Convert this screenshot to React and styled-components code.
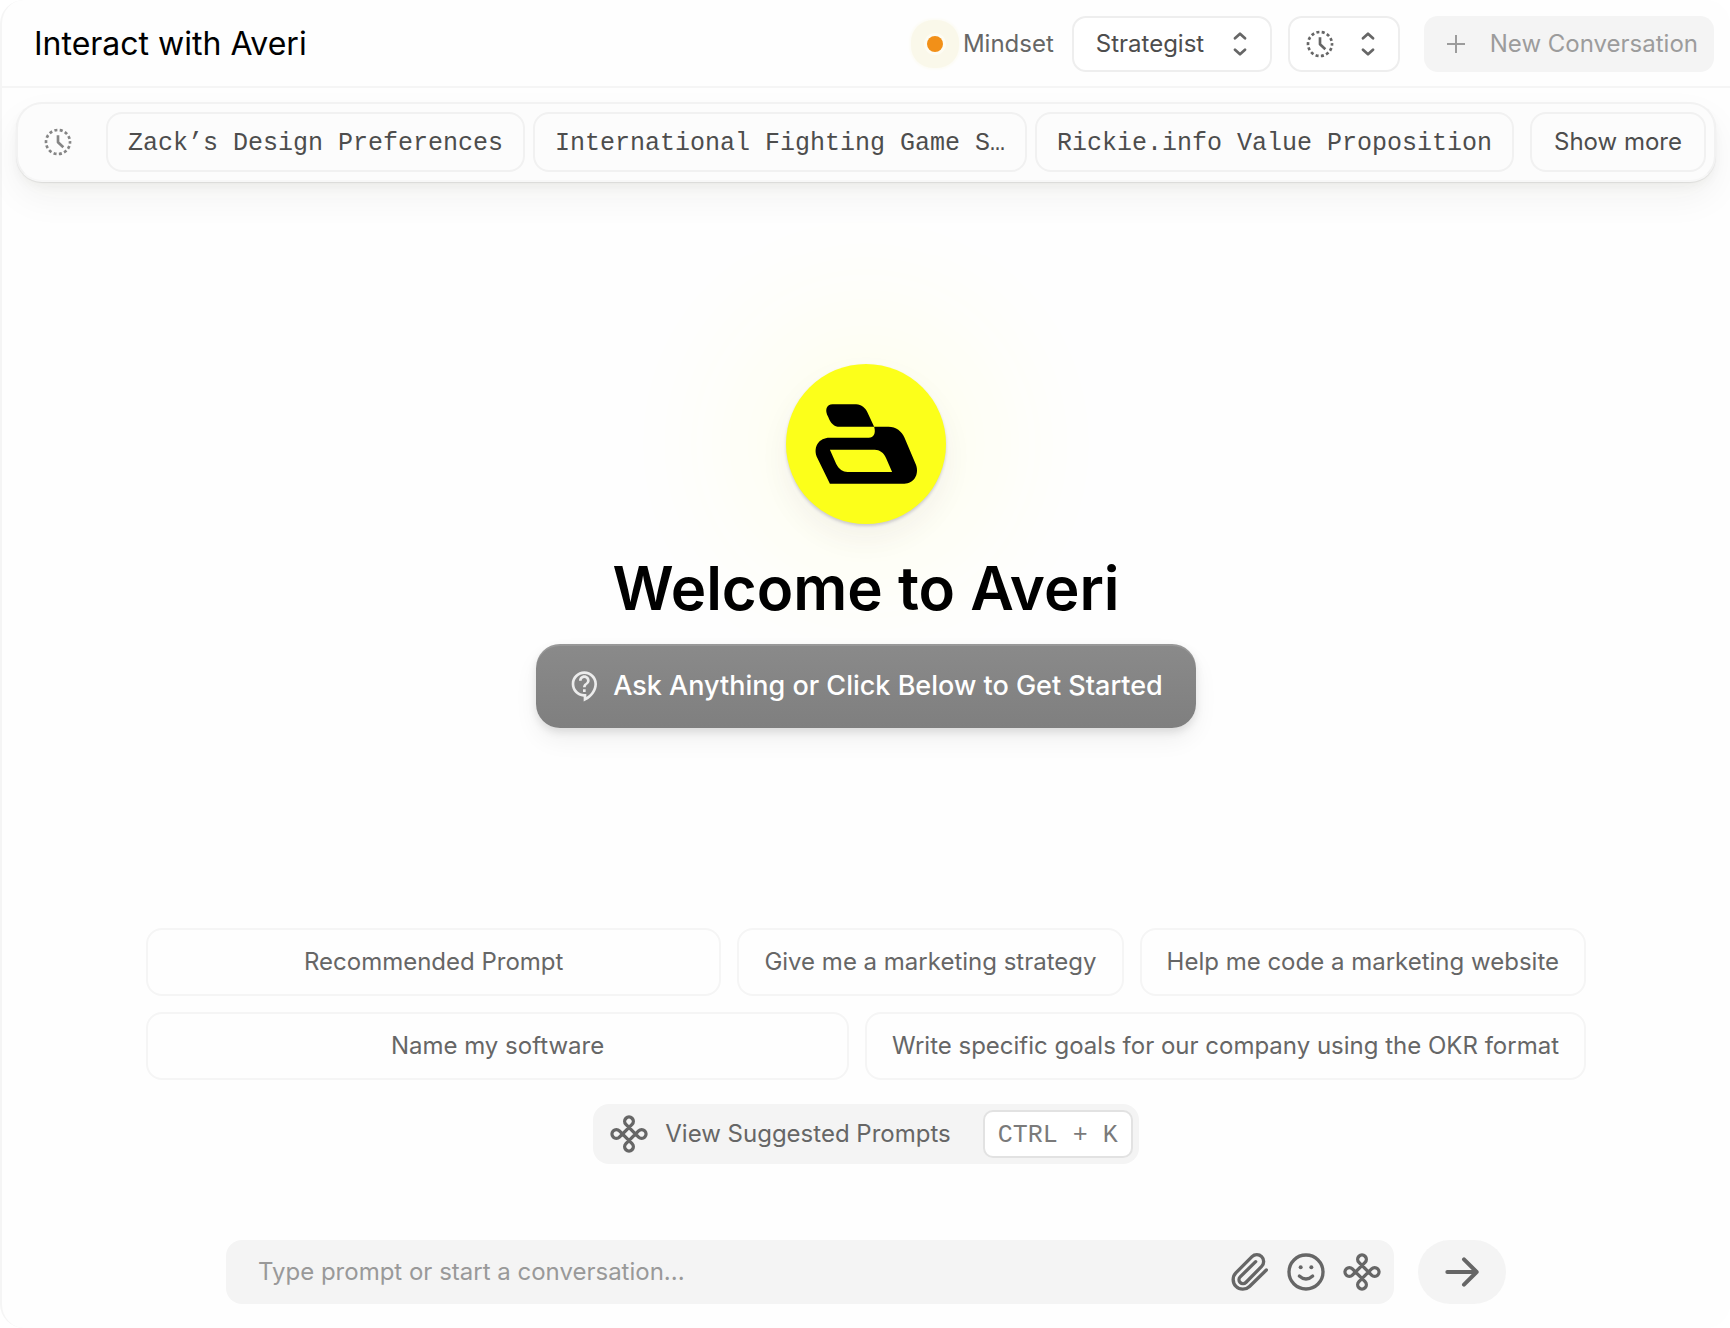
import React, { useState } from 'react'
import styled, { createGlobalStyle } from 'styled-components'
import { MdOutlineContactSupport } from 'react-icons/md'

const chats = [
  'Zack’s Design Preferences',
  'International Fighting Game S…',
  'Rickie.info Value Proposition',
]

const promptRows = [
  ['Recommended Prompt', 'Give me a marketing strategy', 'Help me code a marketing website'],
  ['Name my software', 'Write specific goals for our company using the OKR format'],
]

const modes = ['Strategist', 'Copywriter', 'Designer']

const ClockIcon = () => (
  <Icon $size={28} viewBox="-42 -42 84 84" $stroke={8} aria-hidden="true">
    <circle r="36" strokeDasharray="9 7.16" strokeDashoffset="4" strokeLinecap="butt" />
    <path d="M0 -20V1L16 16" strokeLinecap="butt" />
  </Icon>
)

const ChevronsIcon = () => (
  <Icon $size={24} viewBox="-36 -36 72 72" $stroke={8} aria-hidden="true">
    <path d="M-15 -17L0 -31L15 -17M-15 17L0 31L15 17" />
  </Icon>
)

const PlusIcon = () => (
  <Icon $size={24} viewBox="-12 -12 24 24" $stroke={2} aria-hidden="true">
    <path d="M-9 0H9M0 -9V9" strokeLinecap="butt" />
  </Icon>
)

const LoopIcon = () => (
  <Icon $size={40} viewBox="-60 -60 120 120" $stroke={10} aria-hidden="true">
    <path d="M-9.2 -28.8L28.8 9.2A13 13 0 1 0 28.8 -9.2L-9.2 28.8A13 13 0 1 0 9.2 28.8L-28.8 -9.2A13 13 0 1 0 -28.8 9.2L9.2 -28.8A13 13 0 1 0 -9.2 -28.8Z" />
  </Icon>
)

const ClipIcon = () => (
  <Icon $size={40} viewBox="90 95 120 120" $stroke={10} aria-hidden="true">
    <path d="M199 149L148.5 198.5A29 29 0 0 1 107.5 157.5L156 109A20.5 20.5 0 0 1 185 138L137.5 186.5A12 12 0 0 1 120.5 169.5L167 124" />
  </Icon>
)

const SmileIcon = () => (
  <Icon $size={40} viewBox="258 95 120 120" $stroke={10} aria-hidden="true">
    <circle cx="318" cy="155" r="51" />
    <path d="M298 167Q318 185 338 167" />
    <circle cx="302" cy="141" r="6" fill="currentColor" stroke="none" />
    <circle cx="334" cy="141" r="6" fill="currentColor" stroke="none" />
  </Icon>
)

const ArrowIcon = () => (
  <Icon $size={40} viewBox="726 96 120 120" $stroke={12} aria-hidden="true">
    <path d="M742 156H830M792 118L830 156L792 194" />
  </Icon>
)

const App = () => {
  const [mode, setMode] = useState('Strategist')
  const [text, setText] = useState('')

  return (
    <>
      <GlobalStyle />
      <Page>
        <Header>
          <h1>Interact with Averi</h1>
          <Controls>
            <MindsetLabel htmlFor="mindset">
              <Dot />
              Mindset
            </MindsetLabel>
            <SelectBox>
              <select id="mindset" value={mode} onChange={(e) => setMode(e.target.value)}>
                {modes.map((m) => (
                  <option key={m}>{m}</option>
                ))}
              </select>
              <ChevronsIcon />
            </SelectBox>
            <HistoryButton type="button" aria-label="History" aria-haspopup="menu">
              <ClockIcon />
              <ChevronsIcon />
            </HistoryButton>
            <NewButton type="button">
              <PlusIcon />
              New Conversation
            </NewButton>
          </Controls>
        </Header>

        <RecentBar aria-label="Recent conversations">
          <RecentIcon>
            <ClockIcon />
          </RecentIcon>
          <Chats>
            {chats.map((chat) => (
              <ChatChip key={chat} type="button">
                {chat}
              </ChatChip>
            ))}
          </Chats>
          <Chip type="button">Show more</Chip>
        </RecentBar>

        <Hero>
          <Logo>
            <svg viewBox="137 101 481 481" role="img" aria-label="Averi">
              <path d="M277 222H348C364 222 376 233 382 247L402 290H298C282 290 271 279 264 260C252 240 259 222 277 222Z" />
              <path
                fillRule="evenodd"
                d="M402 290H445C468 290 485 304 493 322L528 405C538 434 521 461 493 461H269L229 379C219 350 236 323 268 323H386C400 323 408 310 402 290ZM269 359L288 402C296 418 308 426 322 426H456L438 384C431 368 418 359 404 359Z"
              />
            </svg>
          </Logo>
          <h2>Welcome to Averi</h2>
          <AskButton type="button">
            <MdOutlineContactSupport aria-hidden="true" />
            Ask Anything or Click Below to Get Started
          </AskButton>
        </Hero>

        <Prompts>
          {promptRows.map((row) => (
            <PromptRow key={row[0]}>
              {row.map((prompt) => (
                <Prompt key={prompt} type="button" onClick={() => setText(prompt)}>
                  {prompt}
                </Prompt>
              ))}
            </PromptRow>
          ))}
        </Prompts>

        <Suggested type="button">
          <LoopIcon />
          <span>View Suggested Prompts</span>
          <kbd>CTRL + K</kbd>
        </Suggested>

        <Composer onSubmit={(e) => e.preventDefault()}>
          <Field>
            <input
              aria-label="Prompt"
              placeholder="Type prompt or start a conversation..."
              value={text}
              onChange={(e) => setText(e.target.value)}
            />
            <Tool type="button" aria-label="Attach file">
              <ClipIcon />
            </Tool>
            <Tool type="button" aria-label="Add emoji">
              <SmileIcon />
            </Tool>
            <Tool type="button" aria-label="Suggested prompts">
              <LoopIcon />
            </Tool>
          </Field>
          <Send type="submit" aria-label="Send">
            <ArrowIcon />
          </Send>
        </Composer>
      </Page>
    </>
  )
}

const sans = `Inter, 'Liberation Sans', sans-serif`
const mono = `'Liberation Mono', monospace`

const GlobalStyle = createGlobalStyle`
  *, *::before, *::after {
    box-sizing: border-box;
  }
  body {
    margin: 0;
    background: #fff;
    font-family: ${sans};
    font-size: 24px;
    line-height: 32px;
    color: #666;
  }
  button, input, select {
    font: inherit;
    color: inherit;
    border: none;
    background: none;
    margin: 0;
    padding: 0;
  }
  button {
    cursor: pointer;
  }
  h1, h2 {
    margin: 0;
    color: #000;
  }
`

const Icon = styled.svg`
  display: block;
  flex: none;
  width: ${({ $size }) => $size}px;
  height: ${({ $size }) => $size}px;
  fill: none;
  stroke: currentColor;
  stroke-width: ${({ $stroke }) => $stroke};
  stroke-linecap: round;
  stroke-linejoin: round;
`

const Page = styled.div`
  min-height: 100vh;
  display: flex;
  flex-direction: column;
  align-items: center;
  padding-bottom: 24px;
  background: #fefefe;
  border-left: 2px solid #f5f5f5;
  border-radius: 24px;
`

const Header = styled.header`
  width: 100%;
  display: flex;
  justify-content: space-between;
  align-items: center;
  padding: 16px 16px 14px 32px;
  border-bottom: 2px solid #f5f5f5;

  h1 {
    font-size: 32px;
    line-height: 40px;
    font-weight: 400;
  }
`

const Controls = styled.div`
  display: flex;
  align-items: center;
  gap: 16px;
`

const MindsetLabel = styled.label`
  display: flex;
  align-items: center;
  gap: 20px;
  padding-right: 2px;
`

const Dot = styled.span`
  width: 16px;
  height: 16px;
  border-radius: 50%;
  background: #f29018;
  box-shadow: 0 0 0 3px #fdfcf3, 0 0 0 16px #faf8ea, 0 0 3px 17px #fcfbf2;
`

const SelectBox = styled.div`
  position: relative;
  color: #4d4d4d;

  select {
    display: block;
    appearance: none;
    width: 200px;
    height: 56px;
    padding: 0 56px 0 22px;
    background: #fff;
    border: 2px solid #eee;
    border-radius: 14px;
    cursor: pointer;
  }
  svg {
    position: absolute;
    right: 20px;
    top: 16px;
    color: #666;
    pointer-events: none;
  }
`

const HistoryButton = styled.button`
  display: flex;
  align-items: center;
  gap: 22px;
  height: 56px;
  padding: 0 18px 0 16px;
  background: #fff;
  border: 2px solid #eee;
  border-radius: 14px;
`

const NewButton = styled.button`
  display: flex;
  align-items: center;
  gap: 22px;
  height: 56px;
  margin-left: 8px;
  padding: 0 16px 0 20px;
  background: #f4f4f4;
  border-radius: 14px;
  color: #9c9c9c;
`

const RecentBar = styled.nav`
  align-self: stretch;
  display: flex;
  align-items: center;
  gap: 16px;
  margin: 14px 14px 0;
  padding: 8px;
  background: #fcfcfc;
  border: 2px solid #f2f2f2;
  border-bottom-color: #f7f7f7;
  border-radius: 26px;
  box-shadow: 0 1px 1px rgba(0, 0, 0, 0.08), 0 6px 12px -2px rgba(30, 30, 20, 0.05),
    0 16px 36px rgba(30, 30, 20, 0.05);
`

const RecentIcon = styled.span`
  padding: 0 18px;
  color: #858585;
`

const Chats = styled.div`
  flex: 1;
  min-width: 0;
  display: flex;
  gap: 8px;
`

const Chip = styled.button`
  flex: none;
  height: 60px;
  padding: 0 22px;
  border: 2px solid #f1f1f1;
  border-radius: 16px;
  color: #4d4d4d;
  white-space: nowrap;
`

const ChatChip = styled(Chip)`
  flex: 1 1 auto;
  padding: 4px 19px 0;
  font-family: ${mono};
  font-size: 25px;
`

const Hero = styled.section`
  flex: 1;
  display: flex;
  flex-direction: column;
  align-items: center;
  justify-content: center;
  padding: 24px 24px 42px;

  h2 {
    position: relative;
    margin: 28px 0 20px;
    font-size: 60px;
    line-height: 72px;
    font-weight: 600;
  }
`

const Logo = styled.div`
  width: 160px;
  height: 160px;
  border-radius: 50%;
  background: #fcff1a;
  box-shadow: 0 2px 3px rgba(40, 40, 80, 0.2), 0 14px 30px rgba(60, 40, 90, 0.06),
    0 0 120px 60px rgba(255, 255, 60, 0.07);

  svg {
    display: block;
    fill: #000;
  }
`

const AskButton = styled.button`
  position: relative;
  display: flex;
  align-items: center;
  gap: 12px;
  padding: 22px 33px;
  background: linear-gradient(#8a8a8a, #7f7f7f);
  border-radius: 24px;
  box-shadow: inset 0 2px 0 rgba(255, 255, 255, 0.12), 0 4px 8px rgba(0, 0, 0, 0.1),
    0 12px 24px rgba(0, 0, 0, 0.06);
  font-size: 27px;
  line-height: 40px;
  font-weight: 500;
  color: #fff;

  svg {
    width: 32px;
    height: 32px;
    color: #ececec;
  }
`

const Prompts = styled.section`
  width: calc(100% - 48px);
  max-width: 1440px;
  display: flex;
  flex-direction: column;
  gap: 16px;
`

const PromptRow = styled.div`
  display: flex;
  gap: 16px;
`

const Prompt = styled.button`
  flex: none;
  min-height: 68px;
  padding: 0 25px;
  border: 2px solid #f5f5f5;
  border-radius: 16px;

  &:first-child {
    flex: 1;
  }
`

const Suggested = styled.button`
  display: flex;
  align-items: center;
  height: 60px;
  margin: 24px 0 76px;
  padding: 0 6px 0 16px;
  background: #f4f4f4;
  border-radius: 16px;

  span {
    margin: 0 32px 0 16px;
  }
  kbd {
    padding: 8px 13px 4px;
    background: #fff;
    border: 2px solid #e2e2e2;
    border-radius: 10px;
    font-family: ${mono};
    font-size: 25px;
    color: #7a7a7a;
  }
`

const Composer = styled.form`
  width: calc(100% - 48px);
  max-width: 1280px;
  display: flex;
  gap: 24px;
`

const Field = styled.div`
  flex: 1;
  display: flex;
  align-items: center;
  gap: 16px;
  height: 64px;
  padding: 0 12px 0 32px;
  background: #f4f4f4;
  border-radius: 16px;

  input {
    flex: 1;
    min-width: 0;
    outline: none;
  }
  input::placeholder {
    color: #999;
    opacity: 1;
  }
`

const Tool = styled.button`
  color: #666;
`

const Send = styled.button`
  display: flex;
  align-items: center;
  justify-content: center;
  width: 88px;
  height: 64px;
  background: #f4f4f4;
  border-radius: 32px;
`

export default App
